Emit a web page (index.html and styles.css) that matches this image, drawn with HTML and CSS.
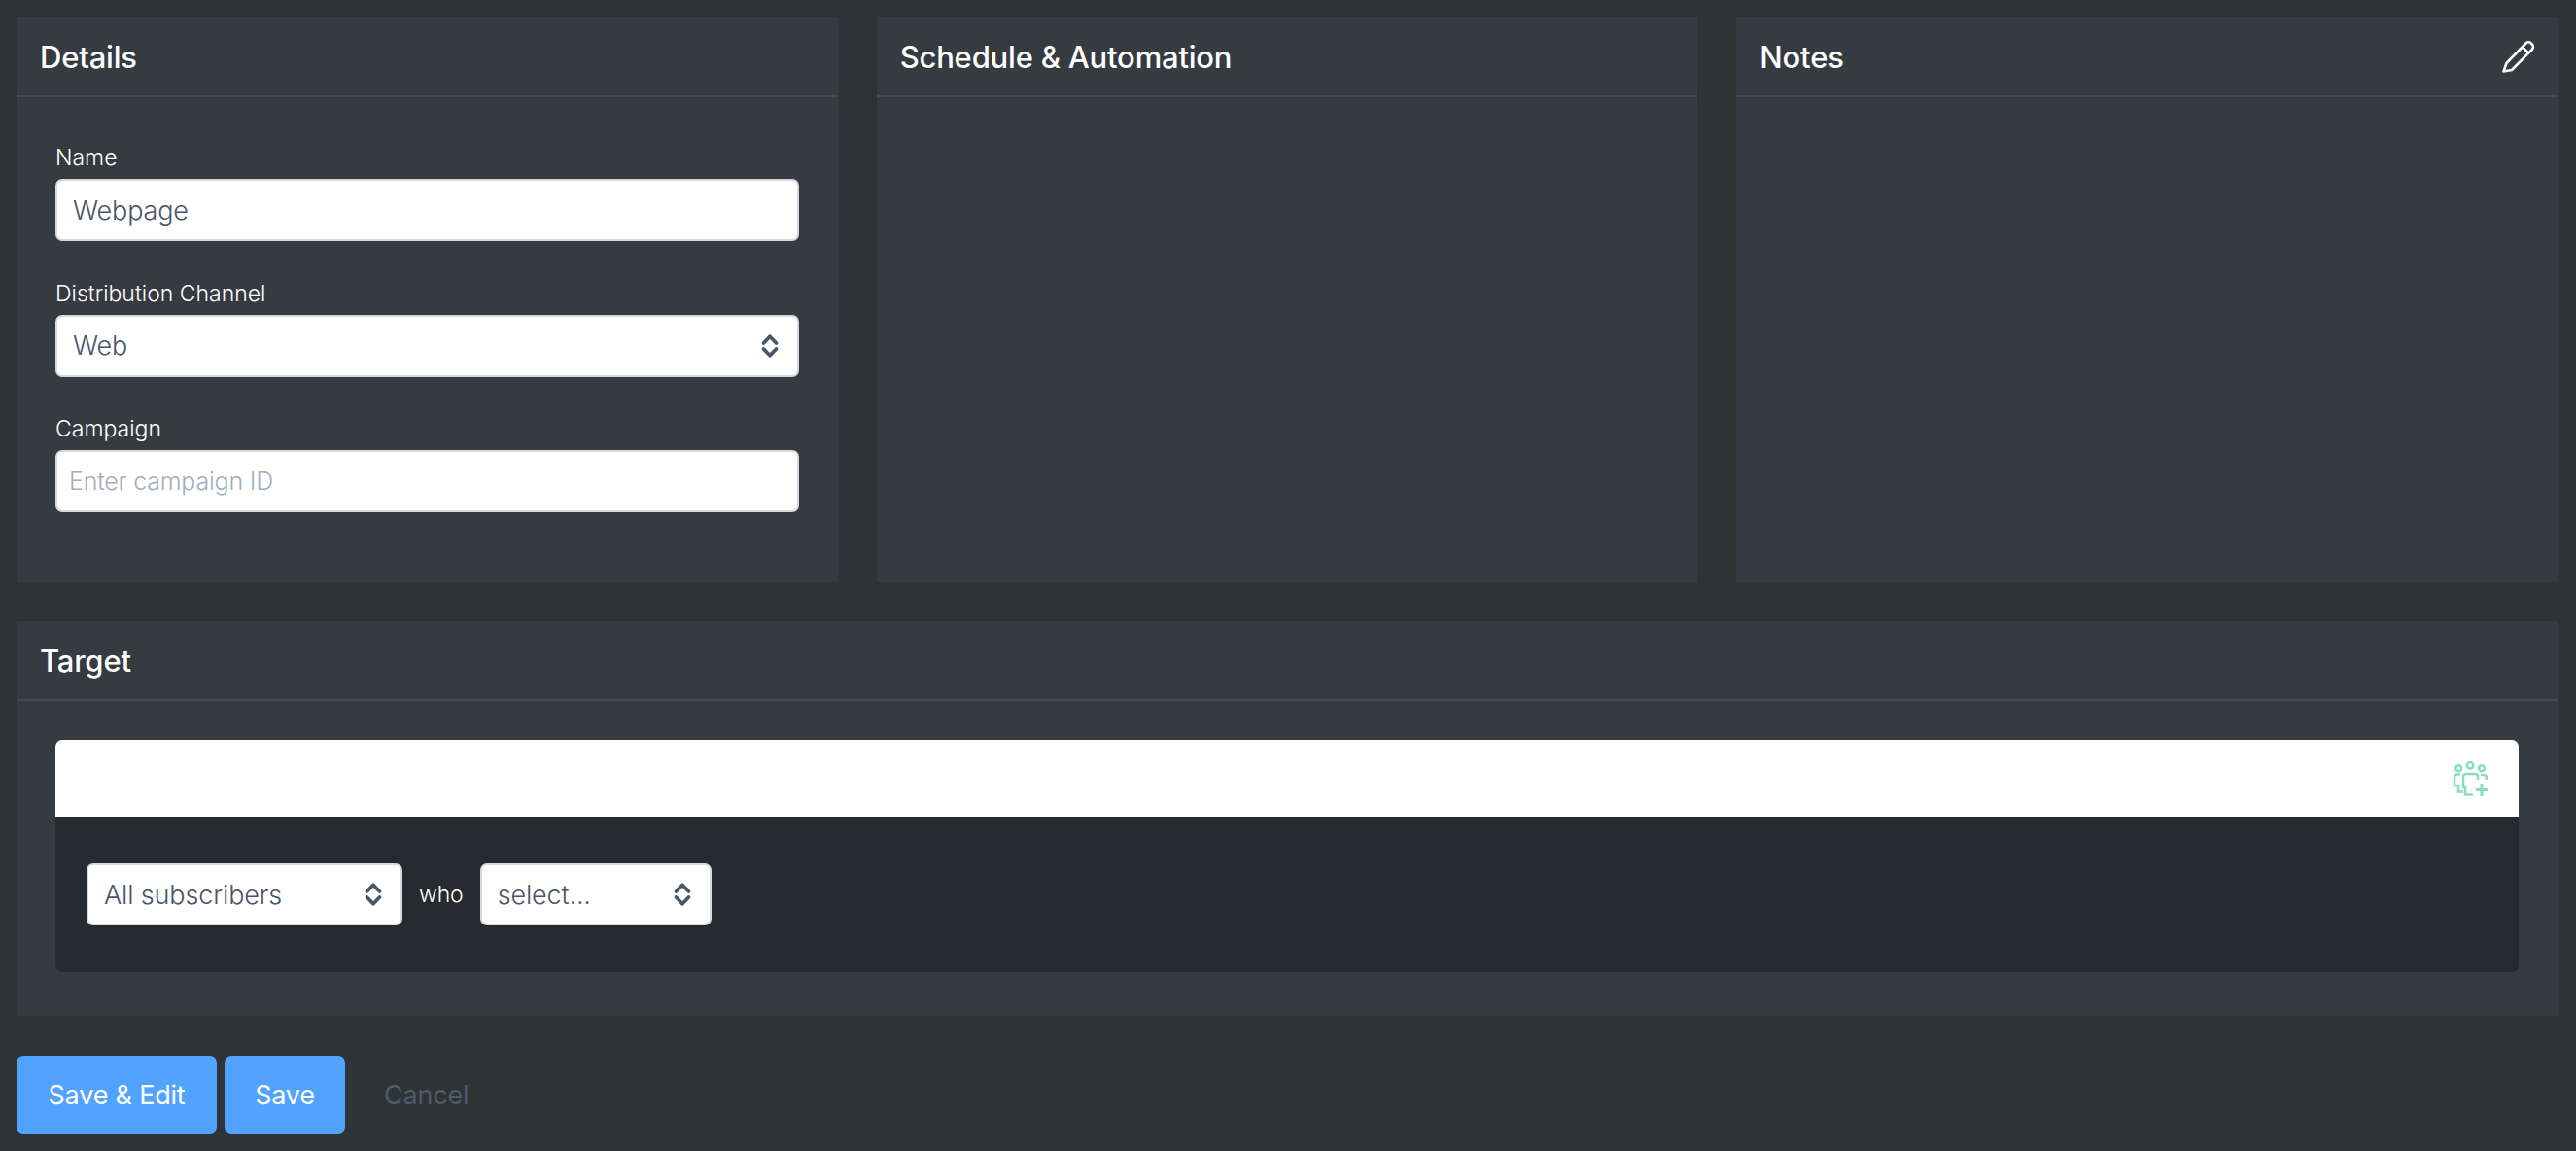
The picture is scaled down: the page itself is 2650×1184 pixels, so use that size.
FILE: index.html
```html
<!DOCTYPE html>
<html lang="en">
<head>
<meta charset="utf-8">
<title>Webpage</title>
<link rel="stylesheet" href="styles.css">
</head>
<body>
<svg class="sprite" width="0" height="0" aria-hidden="true">
  <symbol id="chev" viewBox="0 0 20 28"><path d="M3.500 11 10 4.300 16.500 11M3.500 17 10 23.700 16.500 17" fill="none" stroke="currentColor" stroke-width="3.800" stroke-linecap="round" stroke-linejoin="round"/></symbol>
</svg>
<main class="page">
  <div class="top-row">
    <section class="panel">
      <header class="panel-head"><h2>Details</h2></header>
      <div class="panel-body details-body">
        <div class="field">
          <label for="name">Name</label>
          <input id="name" class="control" type="text" value="Webpage">
        </div>
        <div class="field">
          <label for="channel">Distribution Channel</label>
          <div class="select-wrap">
            <select id="channel" class="control"><option>Web</option></select>
            <svg class="chev"><use href="#chev"/></svg>
          </div>
        </div>
        <div class="field">
          <label for="campaign">Campaign</label>
          <input id="campaign" class="control campaign" type="text" placeholder="Enter campaign ID">
        </div>
      </div>
    </section>
    <section class="panel">
      <header class="panel-head"><h2>Schedule &amp; Automation</h2></header>
    </section>
    <section class="panel">
      <header class="panel-head">
        <h2>Notes</h2>
        <svg class="pencil" viewBox="0 0 34 34" aria-hidden="true"><path d="M1.500 32.500 4.500 24 24.500 3.500a3.800 3.800 0 0 1 5.300 0l1 1a3.800 3.800 0 0 1 0 5.300L10 31ZM21 7.500l6 6" fill="none" stroke="currentColor" stroke-width="2.600" stroke-linejoin="round"/></svg>
      </header>
    </section>
  </div>
  <section class="panel target">
    <header class="panel-head"><h2>Target</h2></header>
    <div class="target-body">
      <div class="segment">
        <div class="segment-bar">
          <svg class="group-add" viewBox="0 0 36 36" aria-hidden="true">
            <g fill="none" stroke="currentColor" stroke-width="2.500">
              <circle cx="18" cy="4.300" r="3.300"/><circle cx="6.300" cy="7.300" r="3"/><circle cx="30" cy="7.300" r="3"/>
              <path d="M21 34.500H13V27H11V16q0-3 3-3H23q3 0 3 3V19"/>
              <path d="M8 13.500H5q-3 0-3 3V25H6V31.500H11"/>
              <path d="M29 14H32q3 0 3 3V19"/>
              <path d="M30 23V36M24 29.500H36" stroke-width="3"/>
            </g>
          </svg>
        </div>
        <div class="segment-rule">
          <div class="select-wrap subs">
            <select class="control" aria-label="Subscribers"><option>All subscribers</option></select>
            <svg class="chev"><use href="#chev"/></svg>
          </div>
          <span class="who">who</span>
          <div class="select-wrap cond">
            <select class="control" aria-label="Condition"><option>select...</option></select>
            <svg class="chev"><use href="#chev"/></svg>
          </div>
        </div>
      </div>
    </div>
  </section>
  <div class="actions">
    <button class="btn primary save-edit" type="button">Save &amp; Edit</button>
    <button class="btn primary save" type="button">Save</button>
    <button class="btn cancel" type="button">Cancel</button>
  </div>
</main>
</body>
</html>
```
FILE: styles.css
```css
* { box-sizing: border-box; }
html, body { margin: 0; height: 100%; }
body {
  background: #2e3336;
  font-family: Inter, "Noto Sans", sans-serif;
  color: #fff;
  overflow: hidden;
}
.sprite { position: absolute; }
.page { padding: 18px 19px 0 17px; }
.top-row {
  display: grid;
  grid-template-columns: repeat(3, 1fr);
  gap: 40px;
}
.panel { background: #363a41; height: 581px; }
.panel-head {
  height: 82px;
  padding: 0 23px 0 24px;
  border-bottom: 2px solid #454b53;
  display: flex;
  align-items: center;
  justify-content: space-between;
}
.panel-head h2 {
  margin: 0;
  font-size: 31px;
  font-weight: 500;
  letter-spacing: -0.2px;
  color: #fff;
}
.pencil { width: 34px; height: 34px; color: #fff; }
.details-body { padding: 48px 40px 0; }
.field { display: flex; flex-direction: column; margin-bottom: 39.500px; }
.field label {
  font-size: 23px;
  font-weight: 350;
  line-height: 28px;
  margin-bottom: 8px;
  color: #fff;
}
.control {
  display: block;
  width: 100%;
  height: 64px;
  padding: 0 16px;
  background: #fff;
  border: 2px solid #d5d9e0;
  border-radius: 7px;
  font-family: inherit;
  font-size: 27px;
  font-weight: 350;
  letter-spacing: -0.15px;
  color: #4a5568;
  appearance: none;
  outline: none;
}
.campaign { padding: 0 12px; font-size: 25px; letter-spacing: -0.2px; }
.campaign::placeholder { color: #a0aec0; opacity: 1; }
.select-wrap { position: relative; }
.chev {
  position: absolute;
  right: 20px;
  top: 18px;
  width: 20px;
  height: 28px;
  color: #4a5568;
  pointer-events: none;
}
.target { margin-top: 40px; height: 406px; }
.target-body { padding: 40px 40px 0; }
.segment { border-radius: 7px; overflow: hidden; }
.segment-bar {
  height: 79px;
  background: #fff;
  display: flex;
  align-items: center;
  justify-content: flex-end;
  padding-right: 32px;
}
.group-add { width: 36px; height: 36px; color: #8adbc2; }
.segment-rule {
  height: 160px;
  background: #272a2e;
  display: flex;
  align-items: center;
  padding-left: 32px;
}
.subs { width: 325px; }
.cond { width: 238px; }
.who { font-size: 23px; font-weight: 350; margin: 0 17px; letter-spacing: -0.1px; }
.actions { display: flex; align-items: center; margin-top: 41px; }
.btn {
  height: 80px;
  border: 0;
  border-radius: 7px;
  font-family: inherit;
  font-size: 27px;
  font-weight: 400;
  letter-spacing: -0.2px;
  padding: 0;
}
.primary { background: #52a3ff; color: #fff; }
.save-edit { width: 206px; }
.save { width: 124px; margin-left: 8px; }
.cancel { background: none; color: #4f5a6c; margin-left: 40px; }
```
